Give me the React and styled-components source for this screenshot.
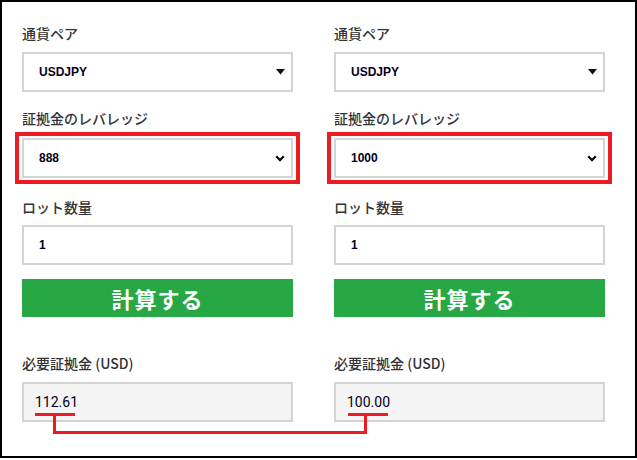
import React from 'react';
import styled, { createGlobalStyle } from 'styled-components';

const GlobalStyle = createGlobalStyle`
  html, body {
    margin: 0;
    padding: 0;
    background: #fff;
  }
  body {
    font-family: 'Noto Sans CJK JP', 'Noto Sans', sans-serif;
  }
`;

const Frame = styled.div`
  position: relative;
  box-sizing: border-box;
  width: 637px;
  height: 458px;
  border: 2px solid #000;
  padding: 21px 20px 0;
  display: grid;
  grid-template-columns: 271px 271px;
  column-gap: 41px;
`;

const Column = styled.div`
  display: flex;
  flex-direction: column;
`;

const Field = styled.div`
  display: flex;
  flex-direction: column;
  margin-top: ${(p) => p.$top || 0}px;
`;

const Label = styled.div`
  font-size: 14px;
  line-height: 20px;
  font-weight: 500;
  color: #333;
  margin-bottom: ${(p) => p.$gap || 9}px;
`;

const Box = styled.div`
  box-sizing: border-box;
  height: 40px;
  border: 2px solid #d4d4d4;
  background: ${(p) => (p.$readonly ? '#f4f4f4' : '#fff')};
  display: flex;
  align-items: center;
  justify-content: space-between;
  padding: ${(p) => (p.$readonly ? '0 10px 0 11px' : '0 6px 0 15px')};
  font-family: ${(p) => (p.$readonly ? "Roboto, 'Liberation Sans', sans-serif" : "'Liberation Sans', Arial, sans-serif")};
  font-size: ${(p) => (p.$readonly ? '14px' : '12px')};
  font-weight: ${(p) => (p.$readonly ? 400 : 700)};
  color: #000020;
`;

const Highlight = styled.div`
  border: 4px solid #ed1c24;
  padding: 2px 3px;
  margin: -6px -7px -6px -7px;
`;

const Button = styled.button`
  margin-top: 14px;
  height: 38px;
  border: none;
  background: #28a745;
  color: #fff;
  font-family: 'Noto Sans CJK JP', sans-serif;
  font-size: 22px;
  font-weight: 700;
  letter-spacing: 1px;
  cursor: pointer;
  padding: 0;
`;

const Connector = styled.svg`
  position: absolute;
  left: -2px;
  top: -2px;
  pointer-events: none;
`;

function Triangle() {
  return (
    <svg width="9" height="6" viewBox="0 0 9 6">
      <path d="M0 0 H9 L4.5 5.5 Z" fill="#111" />
    </svg>
  );
}

function Chevron() {
  return (
    <svg width="10" height="7" viewBox="0 0 10 7">
      <path d="M1.2 1.2 L5 5 L8.8 1.2" fill="none" stroke="#111" strokeWidth="2.3" />
    </svg>
  );
}

function Calculator({ leverage }) {
  return (
    <Column>
      <Field>
        <Label>通貨ペア</Label>
        <Box>
          <span>USDJPY</span>
          <Triangle />
        </Box>
      </Field>
      <Field $top={16}>
        <Label $gap={10}>証拠金のレバレッジ</Label>
        <Highlight>
          <Box>
            <span>{leverage}</span>
            <Chevron />
          </Box>
        </Highlight>
      </Field>
      <Field $top={19}>
        <Label $gap={8}>ロット数量</Label>
        <Box>
          <span>1</span>
        </Box>
      </Field>
      <Button>計算する</Button>
    </Column>
  );
}

function Result({ value }) {
  return (
    <Field $top={36}>
      <Label>必要証拠金 (USD)</Label>
      <Box $readonly>
        <span>{value}</span>
      </Box>
    </Field>
  );
}

export default function App() {
  return (
    <>
      <GlobalStyle />
      <Frame>
        <Column>
          <Calculator leverage="888" />
          <Result value="112.61" />
        </Column>
        <Column>
          <Calculator leverage="1000" />
          <Result value="100.00" />
        </Column>
        <Connector width="637" height="460">
          <path
            d="M35 414.5 H75 M54.5 414.5 V432.5 H365.5 V414.5 M348 414.5 H388"
            fill="none"
            stroke="#ed1c24"
            strokeWidth="3"
          />
        </Connector>
      </Frame>
    </>
  );
}
